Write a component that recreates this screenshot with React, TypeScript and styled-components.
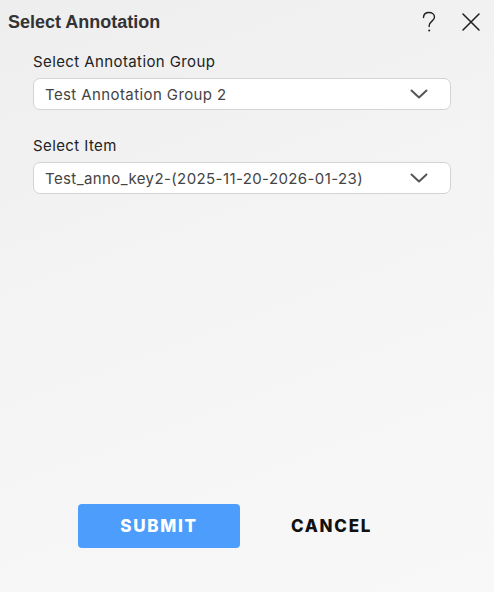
import React from 'react';
import styled, { createGlobalStyle } from 'styled-components';

const GlobalStyle = createGlobalStyle`
  html, body {
    margin: 0;
    padding: 0;
  }
  body {
    font-family: Inter, "Noto Sans", sans-serif;
  }
`;

const Dialog = styled.div`
  width: 494px;
  height: 592px;
  box-sizing: border-box;
  display: flex;
  flex-direction: column;
  background: linear-gradient(160deg, #eeeeee 0%, #f4f4f4 45%, #f9f8f9 100%);
`;

const Header = styled.div`
  display: flex;
  align-items: center;
  height: 44px;
  padding: 0 9px 0 8px;
`;

const Title = styled.h2`
  flex: 1;
  margin: 0;
  font-family: "Liberation Sans", Arial, sans-serif;
  font-weight: 700;
  font-size: 18px;
  color: #333333;
`;

const IconButton = styled.button`
  display: flex;
  align-items: center;
  justify-content: center;
  width: 28px;
  height: 28px;
  padding: 0;
  margin-left: 14px;
  border: none;
  background: none;
  color: #222222;
  cursor: pointer;
`;

const Body = styled.div`
  flex: 1;
  display: flex;
  flex-direction: column;
  gap: 26px;
  padding: 8px 43px 0 33px;
`;

const Field = styled.div`
  display: flex;
  flex-direction: column;
  gap: 7px;
`;

const Label = styled.label`
  font-size: 15px;
  color: #222222;
  letter-spacing: 0.4px;
`;

const SelectBox = styled.div`
  display: flex;
  align-items: center;
  height: 32px;
  box-sizing: border-box;
  padding: 0 22px 0 11px;
  background: #ffffff;
  border: 1px solid #d3d3d3;
  border-radius: 7px;
  font-size: 15px;
  color: #444444;
  letter-spacing: 0.4px;
`;

const SelectText = styled.span`
  flex: 1;
`;

const Footer = styled.div`
  display: flex;
  align-items: center;
  gap: 51px;
  padding: 0 0 44px 78px;
`;

const Button = styled.button<{ $primary?: boolean }>`
  height: 44px;
  width: ${p => (p.$primary ? '162px' : '80px')};
  padding: 0;
  border: none;
  border-radius: 4px;
  background: ${p => (p.$primary ? '#4d9dfc' : 'transparent')};
  color: ${p => (p.$primary ? '#ffffff' : '#111111')};
  font-family: Inter, "Noto Sans", sans-serif;
  font-weight: 800;
  font-size: 17px;
  letter-spacing: 1.7px;
  white-space: nowrap;
  cursor: pointer;
`;

const Chevron = () => (
  <svg width="18" height="10" viewBox="0 0 18 10" fill="none">
    <path d="M1.5 1.5 L9 8.5 L16.5 1.5" stroke="#555555" strokeWidth="2" strokeLinecap="round" strokeLinejoin="round" />
  </svg>
);

const HelpIcon = () => (
  <svg width="16" height="22" viewBox="0 0 16 22" fill="none">
    <path d="M2.5 6.5 C2.5 3.2 5 1.5 8 1.5 C11 1.5 13.5 3.4 13.5 6.3 C13.5 9.8 8.2 10.5 8.2 14.5 L8.2 15.5" stroke="#222222" strokeWidth="1.4" strokeLinecap="round" />
    <circle cx="8.2" cy="19.6" r="1" fill="#222222" />
  </svg>
);

const CloseIcon = () => (
  <svg width="20" height="20" viewBox="0 0 20 20" fill="none">
    <path d="M2 2 L18 18 M18 2 L2 18" stroke="#222222" strokeWidth="1.6" strokeLinecap="round" />
  </svg>
);

export default function App() {
  return (
    <>
      <GlobalStyle />
      <Dialog>
        <Header>
          <Title>Select Annotation</Title>
          <IconButton aria-label="help">
            <HelpIcon />
          </IconButton>
          <IconButton aria-label="close">
            <CloseIcon />
          </IconButton>
        </Header>
        <Body>
          <Field>
            <Label>Select Annotation Group</Label>
            <SelectBox>
              <SelectText>Test Annotation Group 2</SelectText>
              <Chevron />
            </SelectBox>
          </Field>
          <Field>
            <Label>Select Item</Label>
            <SelectBox>
              <SelectText>Test_anno_key2-(2025-11-20-2026-01-23)</SelectText>
              <Chevron />
            </SelectBox>
          </Field>
        </Body>
        <Footer>
          <Button $primary>SUBMIT</Button>
          <Button>CANCEL</Button>
        </Footer>
      </Dialog>
    </>
  );
}
